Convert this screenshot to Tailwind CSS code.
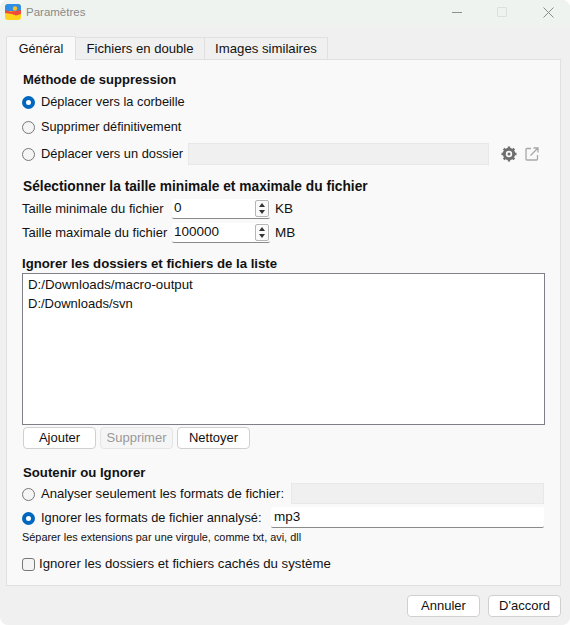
<!DOCTYPE html>
<html lang="fr">
<head>
<meta charset="UTF-8">
<title>Paramètres</title>
<script src="https://cdn.jsdelivr.net/npm/@tailwindcss/browser@4"></script>
</head>
<body class="bg-white">
<div class="w-[570px] h-[625px] flex flex-col overflow-hidden rounded-[8px] bg-[#f0f0f0] font-['Liberation_Sans',Arial,sans-serif] text-[13px] leading-[16px] text-[#111]">
  <!-- title bar -->
  <div class="h-[27px] shrink-0 flex items-center bg-[#eef3ef] pl-[5px] pb-[3px]">
    <svg width="16" height="16" viewBox="0 0 16 16">
      <defs><clipPath id="lg"><rect width="16" height="16" rx="3"/></clipPath></defs>
      <g clip-path="url(#lg)">
        <rect width="16" height="16" fill="#ffd21c"/>
        <rect width="16" height="7" fill="#2f8fe8"/>
        <circle cx="10" cy="4.500" r="2.200" fill="#ffc21c"/>
        <path d="M0 6 L5 7.500 L11 7 L16 6 L16 10 L11 11.500 L7 10 L0 9Z" fill="#ef4a3a"/>
      </g>
    </svg>
    <span class="ml-[5px] text-[11.500px] text-[#8a8a8a]">Paramètres</span>
    <div class="ml-auto flex items-center">
      <div class="w-[10px] h-px bg-[#8f8f8f] mr-[35px]"></div>
      <div class="w-[10px] h-[10px] border border-[#dcdfdc] rounded-[1px] mr-[36px]"></div>
      <svg class="mr-[16px]" width="11" height="11" viewBox="0 0 11 11"><path d="M.5.5l10 10M10.500.5l-10 10" stroke="#8a8a8a" fill="none"/></svg>
    </div>
  </div>

  <!-- tabs -->
  <div class="flex pl-[6px] pt-[9px] h-[33px] shrink-0 relative z-10">
    <div class="h-[24px] w-[70px] bg-[#f9f9f9] border border-b-0 border-[#e0e0e0] rounded-t-[2px] flex items-center justify-center text-[12.500px]">Général</div>
    <div class="mt-[1px] h-[23px] w-[129px] bg-[#f0f0f0] border border-l-0 border-[#e0e0e0] flex items-center justify-center pt-[1px] text-[13.100px]">Fichiers en double</div>
    <div class="mt-[1px] h-[23px] w-[123px] bg-[#f0f0f0] border border-l-0 border-[#e0e0e0] flex items-center justify-center pt-[1px] text-[13.200px]">Images similaires</div>
  </div>

  <!-- pane -->
  <div class="mx-[6px] -mt-px w-[555px] h-[527px] shrink-0 bg-[#f9f9f9] border border-[#e0e0e0] px-[15px] pt-[12px]">
    <h2 class="font-bold leading-[16px] pl-px">Méthode de suppression</h2>

    <div class="mt-[4px] flex items-center h-[20px]">
      <span class="w-[13px] h-[13px] rounded-full border-[4px] border-[#0067c0] bg-white"></span>
      <span class="ml-[6px] text-[12.800px]">Déplacer vers la corbeille</span>
    </div>
    <div class="mt-[5px] flex items-center h-[20px]">
      <span class="w-[13px] h-[13px] rounded-full border border-[#777] bg-[#f5f5f5]"></span>
      <span class="ml-[6px] text-[12.700px]">Supprimer définitivement</span>
    </div>
    <div class="mt-[6px] flex items-center h-[22px]">
      <span class="w-[13px] h-[13px] rounded-full border border-[#777] bg-[#f5f5f5]"></span>
      <span class="ml-[6px] w-[147px] whitespace-nowrap text-[12.850px]">Déplacer vers un dossier</span>
      <div class="w-[301px] h-[22px] bg-[#f0f0f0] border border-[#e8e8e8]"></div>
      <svg class="ml-[12px]" width="16" height="16" viewBox="0 0 16 16">
        <circle cx="8" cy="8" r="4.700" fill="none" stroke="#6f6f6f" stroke-width="3"/>
        <path d="M8 .5v15M.5 8h15M2.700 2.700l10.600 10.600M13.300 2.700L2.700 13.300" stroke="#6f6f6f" stroke-width="2.400"/>
        <circle cx="8" cy="8" r="3.200" fill="#f9f9f9"/>
        <circle cx="8" cy="8" r="1.500" fill="#6f6f6f"/>
      </svg>
      <svg class="ml-[8px]" width="14" height="14" viewBox="0 0 14 14" fill="none" stroke="#a8a8a8" stroke-width="1.300">
        <path d="M6 1.500H2a1 1 0 0 0-1 1V12a1 1 0 0 0 1 1h9.500a1 1 0 0 0 1-1V8"/>
        <path d="M5.500 8.500L12.500 1.500M8.500 1h4.500v4.500"/>
      </svg>
    </div>

    <h2 class="mt-[14px] font-bold text-[13.750px] leading-[16px] pl-px whitespace-nowrap">Sélectionner la taille minimale et maximale du fichier</h2>

    <div class="mt-[2px] flex items-center h-[24px]">
      <span class="w-[150px] whitespace-nowrap">Taille minimale du fichier</span>
      <div class="w-[98px] h-[20px] mb-[1px] bg-white border-b border-[#8a8a8a] rounded-[2px] flex items-center pl-[2px] text-[13.500px]">
        <span class="flex-1">0</span>
        <div class="w-[14px] h-[17px] mr-[1px] border border-[#b5b5b5] rounded-[2px] flex flex-col items-center justify-center gap-[3px] bg-[#fafafa]">
          <span class="w-0 h-0 border-x-[3px] border-x-transparent border-b-[4px] border-b-[#333]"></span>
          <span class="w-0 h-0 border-x-[3px] border-x-transparent border-t-[4px] border-t-[#333]"></span>
        </div>
      </div>
      <span class="ml-[5px] text-[13.500px]">KB</span>
    </div>
    <div class="flex items-center h-[24px]">
      <span class="w-[150px] whitespace-nowrap">Taille maximale du fichier</span>
      <div class="w-[98px] h-[20px] mb-[1px] bg-white border-b border-[#8a8a8a] rounded-[2px] flex items-center pl-[2px] text-[13.500px]">
        <span class="flex-1">100000</span>
        <div class="w-[14px] h-[17px] mr-[1px] border border-[#b5b5b5] rounded-[2px] flex flex-col items-center justify-center gap-[3px] bg-[#fafafa]">
          <span class="w-0 h-0 border-x-[3px] border-x-transparent border-b-[4px] border-b-[#333]"></span>
          <span class="w-0 h-0 border-x-[3px] border-x-transparent border-t-[4px] border-t-[#333]"></span>
        </div>
      </div>
      <span class="ml-[5px] text-[13.500px]">MB</span>
    </div>

    <h2 class="mt-[11px] font-bold text-[13.200px] leading-[16px]">Ignorer les dossiers et fichiers de la liste</h2>

    <div class="mt-[1px] w-[523px] h-[152px] bg-white border border-[#7f7f86] pl-[5px] pt-[1px]">
      <div class="h-[19px] flex items-center text-[13.300px]">D:/Downloads/macro-output</div>
      <div class="h-[19px] flex items-center">D:/Downloads/svn</div>
    </div>

    <div class="mt-[2px] ml-px flex gap-[4px]">
      <button class="w-[73px] h-[22px] bg-white border border-[#d0d0d0] rounded-[4px]">Ajouter</button>
      <button class="w-[73px] h-[22px] bg-[#f5f5f5] border border-[#e5e5e5] rounded-[4px] text-[#999]">Supprimer</button>
      <button class="w-[73px] h-[22px] bg-white border border-[#d0d0d0] rounded-[4px]">Nettoyer</button>
    </div>

    <h2 class="mt-[16px] font-bold text-[13.200px] leading-[16px] pl-px">Soutenir ou Ignorer</h2>

    <div class="mt-[2px] flex items-center h-[22px]">
      <span class="w-[13px] h-[13px] rounded-full border border-[#777] bg-[#f5f5f5]"></span>
      <span class="ml-[6px] w-[250px] whitespace-nowrap text-[13.100px]">Analyser seulement les formats de fichier:</span>
      <div class="w-[253px] h-[21px] mb-[2px] bg-[#f0f0f0] border border-[#e8e8e8]"></div>
    </div>
    <div class="mt-[2px] flex items-center h-[22px]">
      <span class="w-[13px] h-[13px] rounded-full border-[4px] border-[#0067c0] bg-white"></span>
      <span class="ml-[6px] w-[230px] whitespace-nowrap text-[12.800px]">Ignorer les formats de fichier annalysé:</span>
      <div class="w-[273px] h-[21px] mb-[2px] bg-white border-b border-[#8a8a8a] rounded-[2px] pl-[3px] flex items-center text-[13.500px]">mp3</div>
    </div>
    <p class="mt-[1px] h-[14px] text-[10.900px] leading-[14px]">Séparer les extensions par une virgule, comme txt, avi, dll</p>
    <div class="mt-[11px] flex items-center h-[18px]">
      <span class="w-[13px] h-[13px] rounded-[3px] border border-[#777] bg-[#f5f5f5]"></span>
      <span class="ml-[4px] text-[13.200px] whitespace-nowrap">Ignorer les dossiers et fichiers cachés du système</span>
    </div>
  </div>

  <!-- footer -->
  <div class="flex justify-end gap-[8px] pr-[9px] pt-[9px]">
    <button class="w-[73px] h-[22px] bg-white border border-[#d0d0d0] rounded-[4px]">Annuler</button>
    <button class="w-[73px] h-[22px] bg-white border border-[#d0d0d0] rounded-[4px]">D'accord</button>
  </div>
</div>
</body>
</html>
